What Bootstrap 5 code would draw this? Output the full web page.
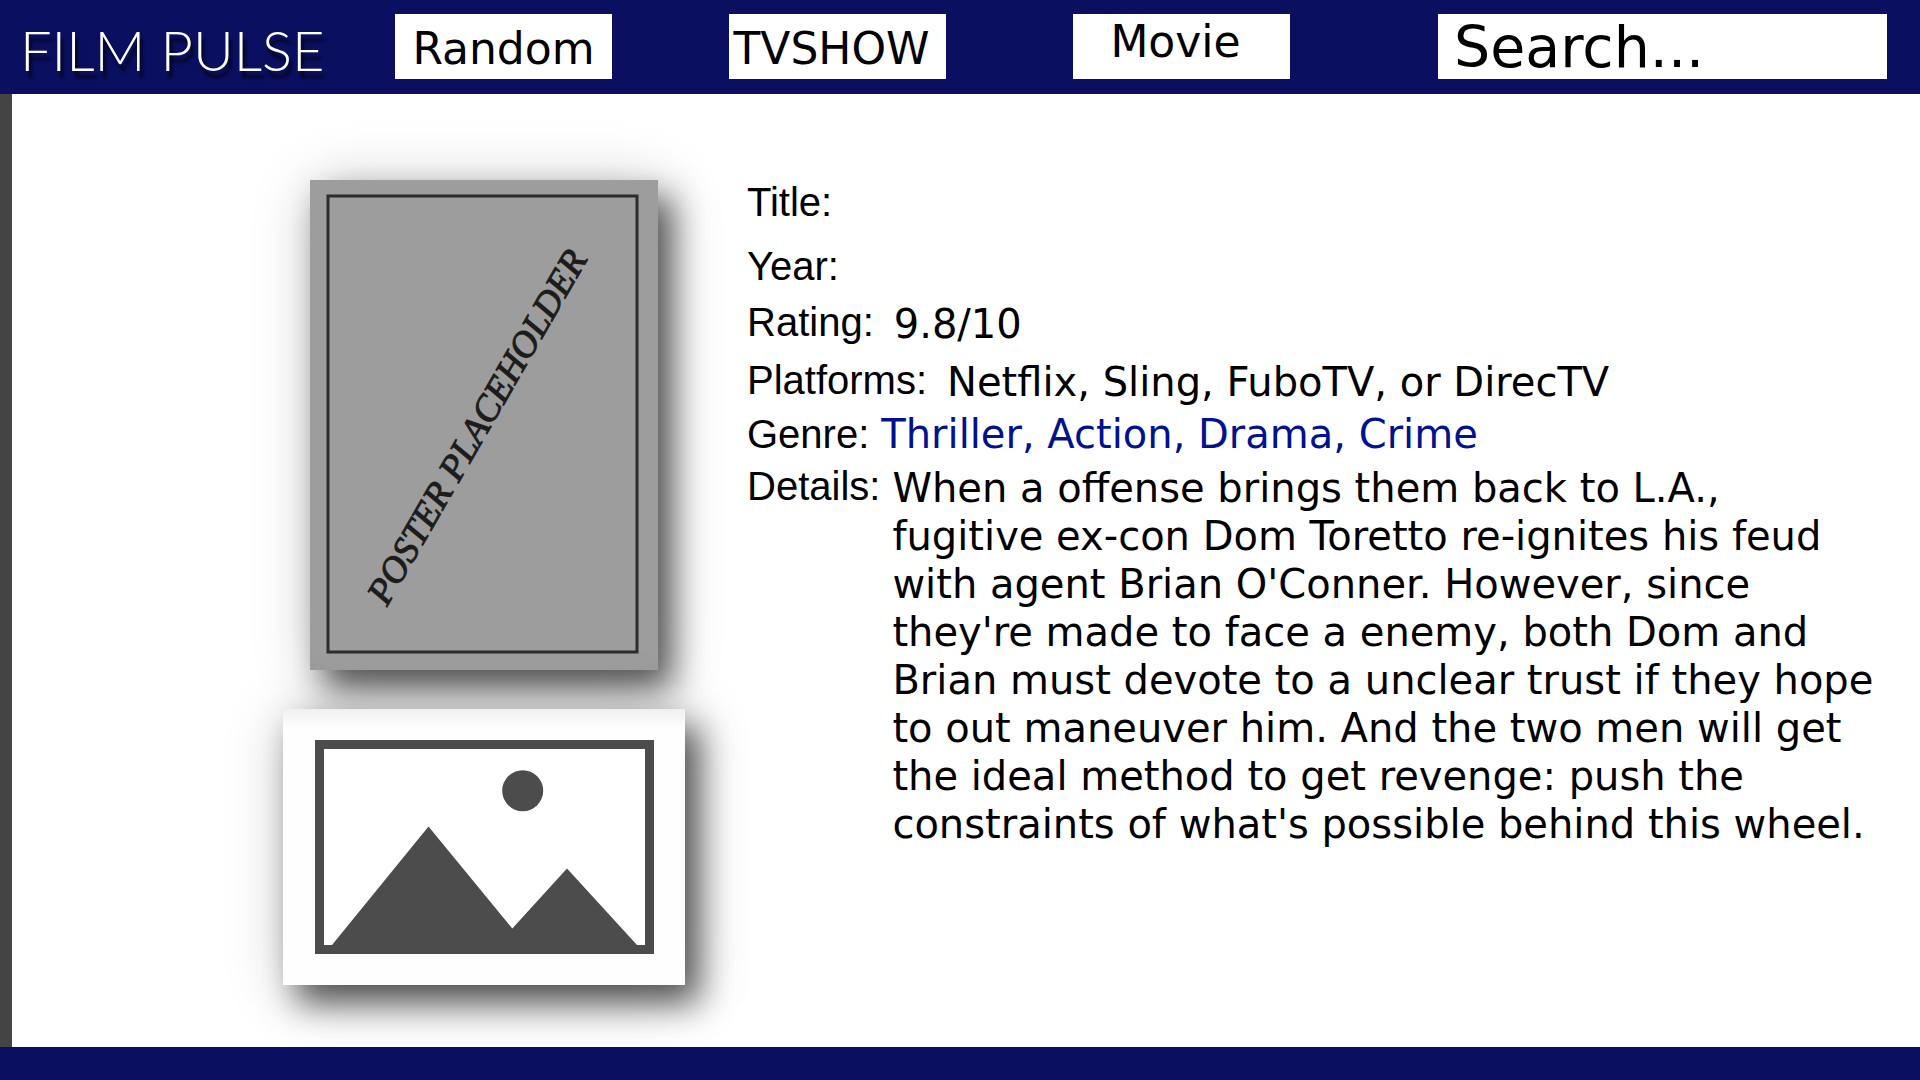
<!DOCTYPE html>
<html lang="en">
<head>
<meta charset="utf-8">
<meta name="viewport" content="width=device-width, initial-scale=1">
<title>Film Pulse</title>
<link href="https://cdn.jsdelivr.net/npm/bootstrap@5.3.0/dist/css/bootstrap.min.css" rel="stylesheet">
<style>
  body { font-family: "DejaVu Sans", Verdana, sans-serif; color: #000; background: #fff; }
  .site-head { background: #0a0f5f; height: 94px; display: grid; align-items: center; padding-bottom: 1px;
    grid-template-columns: 395fr 334fr 344fr 365fr 449fr 33fr; }
  .logo { font-family: Lato, sans-serif; font-weight: 300; font-size: 56px; line-height: 64px; color: #fff;
    padding-left: 20px; padding-top: 7px; text-shadow: 3px 7px 3px rgba(0,0,0,.7); }
  .logo:hover { color: #fff; }
  .nav-box { width: 217px; height: 65px; font-size: 44px; line-height: 52px; color: #000; --bs-btn-hover-bg: #eee;
    padding: 5px 0 0; }
  .nav-start { padding-right: 12px; }
  .lifted { padding-top: 0; padding-bottom: 10px; }
  .search-box { height: 65px; font-size: 57px; line-height: 64px; padding: 0 16px; color: #000; }
  .search-box::placeholder { color: #000; opacity: 1; }
  .stage { border-left: 12px solid #444; display: grid; align-items: start;
    grid-template-columns: 271fr 402px 62px 1173fr; padding-top: 84px; padding-bottom: 62px; }
  .gallery { grid-column: 2; padding-top: 2px; }
  .facts { grid-column: 4; font-size: 40px; line-height: 48px; padding-right: 40px; }
  .facts dt { font-family: "Liberation Sans", Arial, sans-serif; font-weight: 400; flex: none; }
  .facts dd { padding-top: 2px; }
  .facts .genre dd { padding-top: 0; }
  .wide-gap { column-gap: 20px; }
  .slim-gap { column-gap: 12px; }
  .genre a { color: #00128c; }
  .poster, .still { display: block; box-shadow: 14px 18px 32px rgba(0,0,0,.64), 4px 6px 60px rgba(0,0,0,.2); }
  .poster { width: 348px; height: 490px; }
  .still { width: 402px; height: 276px; background: linear-gradient(#f0f0f0, #fefefe 20px); }
  .site-foot { background: #0a0f5f; height: 33px; position: relative; }
</style>
</head>
<body class="d-flex flex-column min-vh-100">
<header class="site-head">
  <a class="logo text-decoration-none text-nowrap" href="#">FILM PULSE</a>
  <button type="button" class="nav-box btn btn-light bg-white border-0 rounded-0">Random</button>
  <button type="button" class="nav-box nav-start btn btn-light bg-white border-0 rounded-0">TVSHOW</button>
  <button type="button" class="nav-box nav-start lifted btn btn-light bg-white border-0 rounded-0">Movie</button>
  <input type="search" class="search-box form-control border-0 rounded-0" placeholder="Search..." aria-label="Search">
</header>
<main class="stage flex-grow-1">
  <div class="gallery d-flex flex-column align-items-center">
    <svg class="poster" viewBox="0 0 348 490" role="img" aria-label="Poster placeholder">
      <rect width="348" height="490" fill="#9d9d9d"/>
      <rect x="18" y="16" width="309" height="456" fill="none" stroke="#2c2c2c" stroke-width="3"/>
      <text transform="translate(77 427) rotate(-60)" font-family="Liberation Serif, serif" font-style="italic" font-size="37" fill="#1c1c1c" stroke="#1c1c1c" stroke-width="1">POSTER PLACEHOLDER</text>
    </svg>
    <svg class="still" style="margin-top:39px" viewBox="0 0 402 276" role="img" aria-label="Image placeholder">
      <rect x="36.500" y="35.500" width="330" height="205" fill="#fff" stroke="#4c4c4c" stroke-width="9"/>
      <circle cx="239.700" cy="81.700" r="20.500" fill="#4c4c4c"/>
      <path d="M49 236 145.500 117.500 229.300 219.500 284 159.500 354 236Z" fill="#4c4c4c"/>
    </svg>
  </div>
  <dl class="facts mb-0">
    <div class="d-flex mb-3"><dt>Title:</dt></div>
    <div class="d-flex mb-2"><dt>Year:</dt></div>
    <div class="d-flex wide-gap mb-2"><dt>Rating:</dt><dd class="mb-0">9.8/10</dd></div>
    <div class="d-flex wide-gap mb-1"><dt>Platforms:</dt><dd class="mb-0">Netflix, Sling, FuboTV, or DirecTV</dd></div>
    <div class="d-flex slim-gap mb-1 genre"><dt>Genre:</dt><dd class="mb-0"><a class="text-decoration-none" href="#">Thriller</a><a class="text-decoration-none" href="#">, Action</a><a class="text-decoration-none" href="#">, Drama</a><a class="text-decoration-none" href="#">, Crime</a></dd></div>
    <div class="d-flex slim-gap"><dt>Details:</dt><dd class="mb-0">When a offense brings them back to L.A., fugitive ex-con Dom Toretto re-ignites his feud with agent Brian O'Conner. However, since they're made to face a enemy, both Dom and Brian must devote to a unclear trust if they hope to out maneuver him. And the two men will get the ideal method to get revenge: push the constraints of what's possible behind this wheel.</dd></div>
  </dl>
</main>
<footer class="site-foot"></footer>
<script src="https://cdn.jsdelivr.net/npm/bootstrap@5.3.0/dist/js/bootstrap.bundle.min.js"></script>
</body>
</html>
